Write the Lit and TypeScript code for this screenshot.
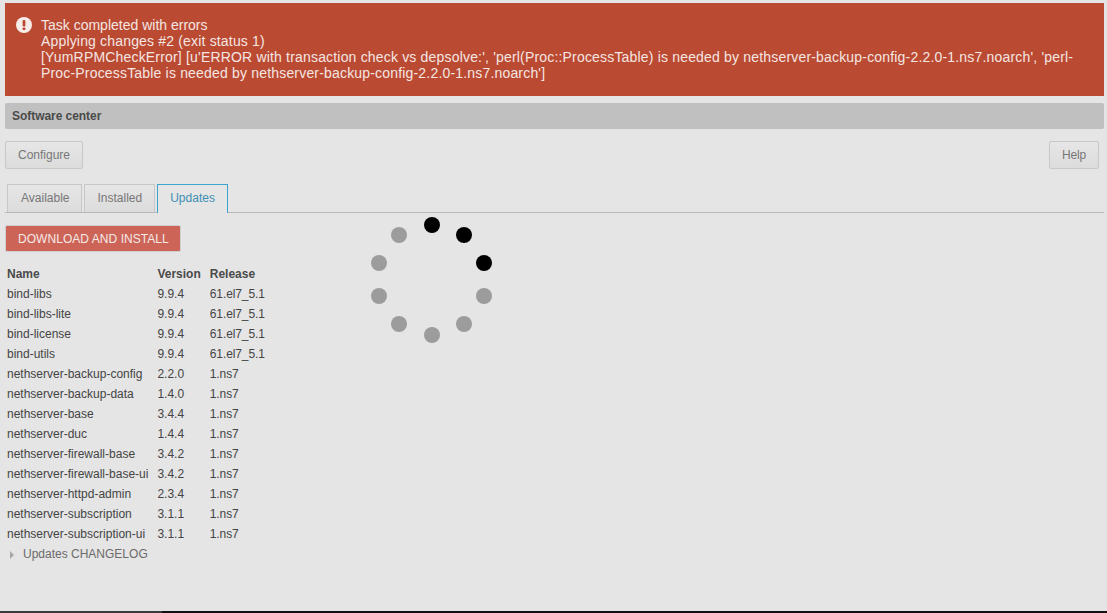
import { LitElement, html, css, svg } from "lit";
import { customElement } from "lit/decorators.js";

const rows = [
  ["bind-libs", "9.9.4", "61.el7_5.1"],
  ["bind-libs-lite", "9.9.4", "61.el7_5.1"],
  ["bind-license", "9.9.4", "61.el7_5.1"],
  ["bind-utils", "9.9.4", "61.el7_5.1"],
  ["nethserver-backup-config", "2.2.0", "1.ns7"],
  ["nethserver-backup-data", "1.4.0", "1.ns7"],
  ["nethserver-base", "3.4.4", "1.ns7"],
  ["nethserver-duc", "1.4.4", "1.ns7"],
  ["nethserver-firewall-base", "3.4.2", "1.ns7"],
  ["nethserver-firewall-base-ui", "3.4.2", "1.ns7"],
  ["nethserver-httpd-admin", "2.3.4", "1.ns7"],
  ["nethserver-subscription", "3.1.1", "1.ns7"],
  ["nethserver-subscription-ui", "3.1.1", "1.ns7"],
];

const dots: [number, number, string][] = [
  [72, 20, "#000"], [104, 30, "#000"], [124, 58, "#000"], [124, 91, "#9c9c9c"], [104, 119, "#9c9c9c"],
  [72, 130, "#9c9c9c"], [39, 119, "#9c9c9c"], [19, 91, "#9c9c9c"], [19, 58, "#9c9c9c"], [39, 30, "#9c9c9c"],
];

@customElement("app-root")
export class AppRoot extends LitElement {
  static styles = css`
    :host {
      display: block;
      position: relative;
      height: 613px;
      overflow: hidden;
      background: #e5e5e5;
      font-family: "Liberation Sans", Arial, sans-serif;
      font-size: 12px;
      color: #444;
    }
    .page { padding: 3px 3px 0 5px; display: flex; flex-direction: column; }
    .alert {
      height: 93px;
      box-sizing: border-box;
      background: #bb4a32;
      color: #f4e6e2;
      font-size: 14px;
      line-height: 16px;
      padding: 14px 0 0 36px;
      position: relative;
      white-space: nowrap;
    }
    .alert svg { position: absolute; left: 11px; top: 14px; }
    .alert span { display: block; }
    .alert .l2 { letter-spacing: 0.17px; }
    .alert .l3 { letter-spacing: 0.18px; }
    .alert .l4 { letter-spacing: 0.18px; }
    .title {
      margin-top: 7px;
      height: 26px;
      background: #c0c0c0;
      border-radius: 2px;
      font-weight: bold;
      color: #4a4a4a;
      padding-left: 7px;
      line-height: 26px;
      letter-spacing: -0.05px;
    }
    .actions { display: flex; justify-content: space-between; margin-top: 12px; padding-right: 5px; }
    .btn {
      height: 28px;
      box-sizing: border-box;
      border: 1px solid #c8c8c8;
      border-radius: 2px;
      background: linear-gradient(#e6e6e6, #dcdcdc);
      color: #777;
      line-height: 26px;
      padding: 0 12px;
    }
    .btn.help { letter-spacing: -0.2px; }
    .tabs {
      display: flex;
      gap: 2px;
      margin-top: 15px;
      height: 29px;
      box-sizing: border-box;
      padding-left: 2px;
      border-bottom: 1px solid #b8b8b8;
    }
    .tab {
      height: 28px;
      box-sizing: border-box;
      border: 1px solid #c8c8c8;
      border-bottom: 0;
      background: linear-gradient(#e6e6e6, #dcdcdc);
      color: #777;
      padding: 0 12px;
      line-height: 27px;
      border-radius: 1px 1px 0 0;
    }
    .tab:first-child { padding-left: 13px; }
    .tab.on {
      height: 29px;
      border-color: #39a5cc;
      background: #e5e5e5;
      color: #3f8fb5;
    }
    .primary {
      align-self: flex-start;
      margin-top: 12px;
      height: 27px;
      box-sizing: border-box;
      background: #cc6558;
      border: 1px solid #cfcfcf;
      border-radius: 2px;
      color: #f6e9e6;
      line-height: 26px;
      padding: 0 11px 0 12px;
      letter-spacing: 0.05px;
    }
    table { border-collapse: collapse; margin-top: 12px; align-self: flex-start; }
    th, td { padding: 0 7px 0 2px; height: 20px; text-align: left; white-space: nowrap; font-size: 12px; }
    td:last-child { letter-spacing: -0.1px; }
    th { font-weight: bold; color: #4a4a4a; }
    .log { display: flex; align-items: center; height: 20px; color: #6b6b6b; margin-left: 5px; gap: 9px; }
    .log i { width: 0; height: 0; border-left: 4px solid #a8a8a8; border-top: 4px solid transparent; border-bottom: 4px solid transparent; margin-top: 2px; }
    .spinner { position: absolute; left: 360px; top: 205px; }
    .bottom { position: absolute; left: 0; right: 0; bottom: 0; height: 2px; background: #111; }
    .bottom b { display: block; width: 162px; height: 100%; background: #3a3a3a; }
  `;

  render() {
    return html`
      <div class="page">
        <div class="alert">
          <svg width="16" height="16" viewBox="0 0 16 16">
            <circle cx="8" cy="8" r="8" fill="#f6ecea"></circle>
            <rect x="6.6" y="3" width="2.8" height="6.4" rx="1" fill="#bb4a32"></rect>
            <rect x="6.6" y="10.4" width="2.8" height="2.6" rx="0.8" fill="#bb4a32"></rect>
          </svg>
          <span>Task completed with errors</span>
          <span class="l2">Applying changes #2 (exit status 1)</span>
          <span class="l3">[YumRPMCheckError] [u'ERROR with transaction check vs depsolve:', 'perl(Proc::ProcessTable) is needed by nethserver-backup-config-2.2.0-1.ns7.noarch', 'perl-</span>
          <span class="l4">Proc-ProcessTable is needed by nethserver-backup-config-2.2.0-1.ns7.noarch']</span>
        </div>
        <div class="title">Software center</div>
        <div class="actions">
          <div class="btn">Configure</div>
          <div class="btn help">Help</div>
        </div>
        <div class="tabs">
          <div class="tab">Available</div>
          <div class="tab">Installed</div>
          <div class="tab on">Updates</div>
        </div>
        <div class="primary">DOWNLOAD AND INSTALL</div>
        <table>
          <thead><tr><th>Name</th><th>Version</th><th>Release</th></tr></thead>
          <tbody>
            ${rows.map((r) => html`<tr><td>${r[0]}</td><td>${r[1]}</td><td>${r[2]}</td></tr>`)}
          </tbody>
        </table>
        <div class="log"><i></i><span>Updates CHANGELOG</span></div>
      </div>
      <svg class="spinner" width="145" height="145" viewBox="0 0 145 145">
        ${dots.map((d) => svg`<circle cx=${d[0]} cy=${d[1]} r="8" fill=${d[2]}></circle>`)}
      </svg>
      <div class="bottom"><b></b></div>
    `;
  }
}
